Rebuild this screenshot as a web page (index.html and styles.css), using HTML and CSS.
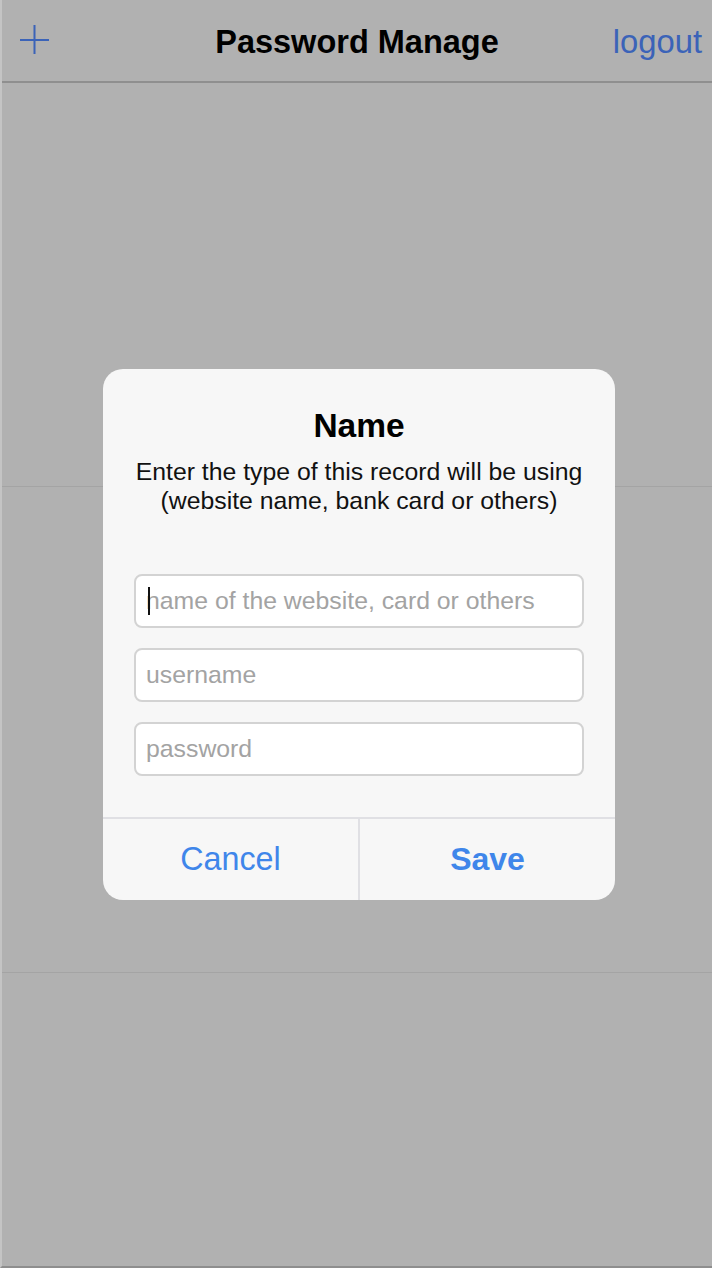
FILE: index.html
```html
<!DOCTYPE html>
<html>
<head>
<meta charset="utf-8">
<link rel="stylesheet" href="styles.css">
</head>
<body>
<div class="screen">
  <header class="navbar">
    <span class="nav-add">
      <svg width="32" height="32" viewBox="0 0 32 32"><path d="M2 16H31M16.5 1V30" stroke="#3b63b8" stroke-width="2" fill="none"/></svg>
    </span>
    <h1 class="nav-title">Password Manage</h1>
    <span class="nav-logout">logout</span>
  </header>
  <div class="list">
    <div class="row row-first"></div>
    <div class="row row-second"></div>
    <div class="row row-rest"></div>
  </div>
  <div class="overlay">
    <div class="dialog">
      <div class="dialog-body">
        <h2 class="dialog-title">Name</h2>
        <p class="dialog-msg">Enter the type of this record will be using<br>(website name, bank card or others)</p>
        <div class="fields">
          <div class="field"><span class="caret"></span><span class="ph">name of the website, card or others</span></div>
          <div class="field"><span class="ph">username</span></div>
          <div class="field"><span class="ph">password</span></div>
        </div>
      </div>
      <div class="dialog-actions">
        <div class="action">Cancel</div>
        <div class="action action-save">Save</div>
      </div>
    </div>
  </div>
</div>
</body>
</html>
```
FILE: styles.css
```css
* { box-sizing: border-box; }
html, body { margin: 0; padding: 0; }
body {
  width: 712px;
  height: 1268px;
  overflow: hidden;
  font-family: "Liberation Sans", Arial, sans-serif;
  background: #b1b1b1;
}
.screen {
  position: relative;
  width: 712px;
  height: 1268px;
  background: #b1b1b1;
  border-left: 2px solid #c4c4c4;
  border-bottom: 2px solid #8e8e8e;
  display: flex;
  flex-direction: column;
}
.navbar {
  height: 83px;
  flex: none;
  border-bottom: 2px solid #8f8f8f;
  display: flex;
  align-items: center;
  justify-content: space-between;
  padding: 0 10px 0 16px;
  position: relative;
}
.nav-add { display: flex; width: 32px; height: 32px; margin-top: -2px; }
.nav-title {
  position: absolute;
  left: 0; right: 0;
  top: 22px;
  text-align: center;
  margin: 0;
  font-size: 32.5px;
  line-height: 40px;
  font-weight: bold;
  color: #000;
  pointer-events: none;
}
.nav-logout {
  font-size: 32.8px;
  line-height: 40px;
  color: #3b63b8;
  margin-top: 3px;
}
.list { flex: 1; display: flex; flex-direction: column; }
.row { border-bottom: 1px solid #a4a4a4; }
.row-first { height: 404px; }
.row-second { height: 486px; }
.row-rest { flex: 1; border-bottom: none; }
.overlay {
  position: absolute;
  left: 101px;
  top: 369px;
}
.dialog {
  width: 512px;
  background: #f7f7f7;
  border-radius: 20px;
  overflow: hidden;
}
.dialog-body {
  padding: 39px 20px 41px;
  text-align: center;
}
.dialog-title {
  margin: 0;
  font-size: 33.5px;
  font-weight: bold;
  line-height: 36px;
  color: #000;
}
.dialog-msg {
  margin: 13px 0 0;
  font-size: 24.8px;
  line-height: 29px;
  color: #111;
  white-space: nowrap;
}
.fields {
  margin: 59px 11px 0;
  display: flex;
  flex-direction: column;
  gap: 20px;
}
.field {
  height: 54px;
  background: #fff;
  border: 2px solid #d3d3d3;
  border-radius: 8px;
  display: flex;
  align-items: center;
  padding-left: 10px;
  text-align: left;
  position: relative;
}
.ph {
  font-size: 24.8px;
  color: #a3a3a3;
}
.caret {
  position: absolute;
  left: 12px;
  top: 11px;
  width: 2px;
  height: 28px;
  background: #111;
}
.dialog-actions {
  display: flex;
  border-top: 2px solid #e0e0e4;
  height: 83px;
}
.action {
  flex: 1;
  display: flex;
  align-items: center;
  justify-content: center;
  font-size: 32.3px;
  color: #3f86ea;
}
.action + .action { border-left: 2px solid #e0e0e4; }
.action-save { font-weight: bold; font-size: 32px; }
```
